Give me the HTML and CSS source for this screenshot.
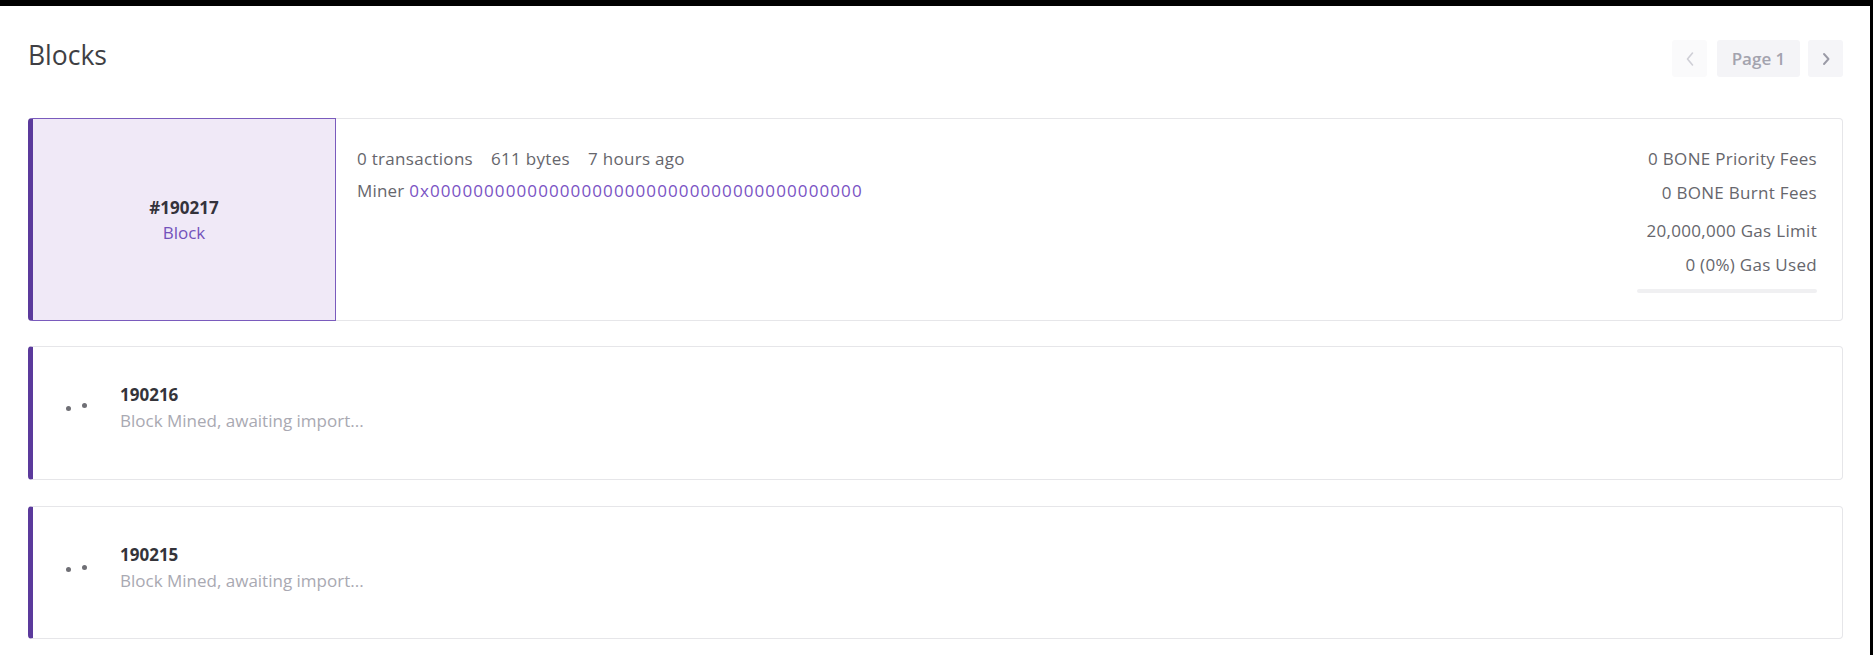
FILE: index.html
```html
<!DOCTYPE html>
<html lang="en">
<head>
<meta charset="utf-8">
<title>Blocks</title>
<link rel="stylesheet" href="styles.css">
</head>
<body>
<div class="page">
  <header class="header">
    <h1 class="title">Blocks</h1>
    <nav class="pager">
      <span class="pager-btn pager-btn--disabled">
        <svg width="10" height="16" viewBox="0 0 10 16"><polyline points="7.5,2 2.5,8 7.5,14" fill="none" stroke="#cfcfd6" stroke-width="1.6" stroke-linecap="round" stroke-linejoin="round"/></svg>
      </span>
      <span class="pager-page">Page 1</span>
      <span class="pager-btn">
        <svg width="10" height="16" viewBox="0 0 10 16"><polyline points="3,3 7.5,8 3,13" fill="none" stroke="#9a9aa6" stroke-width="1.9" stroke-linecap="round" stroke-linejoin="round"/></svg>
      </span>
    </nav>
  </header>

  <div class="list">
    <div class="card card--block">
      <div class="block-tile">
        <div class="block-number">#190217</div>
        <div class="block-label">Block</div>
      </div>
      <div class="block-main">
        <div class="meta-row">
          <span>0 transactions</span>
          <span>611 bytes</span>
          <span>7 hours ago</span>
        </div>
        <div class="meta-row meta-row--miner">Miner&nbsp;<span class="address">0x0000000000000000000000000000000000000000</span></div>
      </div>
      <div class="block-side">
        <div class="side-row">0 BONE Priority Fees</div>
        <div class="side-row">0 BONE Burnt Fees</div>
        <div class="side-row side-row--gap">20,000,000 Gas Limit</div>
        <div class="side-row">0 (0%) Gas Used</div>
        <div class="gas-bar"><div class="gas-fill" style="width:0%"></div></div>
      </div>
    </div>

    <div class="card card--pending">
      <div class="loader"><span class="dot dot--a"></span><span class="dot dot--b"></span></div>
      <div class="pending-text">
        <div class="pending-number">190216</div>
        <div class="pending-status">Block Mined, awaiting import...</div>
      </div>
    </div>

    <div class="card card--pending">
      <div class="loader"><span class="dot dot--c"></span><span class="dot dot--d"></span></div>
      <div class="pending-text">
        <div class="pending-number">190215</div>
        <div class="pending-status">Block Mined, awaiting import...</div>
      </div>
    </div>
  </div>
</div>
</body>
</html>
```

FILE: styles.css
```css
* { box-sizing: border-box; }

html, body {
  margin: 0;
  padding: 0;
  background: #000;
  height: 100%;
}

body {
  font-family: "Open Sans", "Noto Sans", sans-serif;
  font-size: 17px;
  color: #6a6a70;
}

.page {
  margin-top: 6px;
  margin-right: 3px;
  background: #fff;
  min-height: calc(100vh - 6px);
  padding: 29px 27px 20px 28px;
}

.header {
  display: flex;
  justify-content: space-between;
  align-items: flex-start;
}

.title {
  margin: 2px 0 0;
  font-size: 26.5px;
  font-weight: 400;
  line-height: 36px;
  color: #3f3f44;
}

.pager {
  display: flex;
  margin-top: 5px;
}

.pager-btn {
  width: 35px;
  height: 37px;
  display: flex;
  align-items: center;
  justify-content: center;
  background: #f5f5f8;
  border-radius: 3px;
}

.pager-btn--disabled { background: #fafafb; }

.pager-page {
  height: 37px;
  width: 83px;
  margin: 0 8px 0 10px;
  display: flex;
  align-items: center;
  justify-content: center;
  background: #f4f4f7;
  border-radius: 3px;
  color: #a3a3ae;
  font-weight: 600;
  font-size: 17px;
}

.list {
  margin-top: 41px;
  display: flex;
  flex-direction: column;
  gap: 25px;
}

.card {
  border: 1px solid #e6e6e9;
  border-radius: 4px;
  background: #fff;
  display: flex;
}

.card--block {
  height: 203px;
  border-left: none;
}

.block-tile {
  width: 308px;
  flex: none;
  background: #f0e9f7;
  border: 1px solid #7a5bbd;
  border-left: 5px solid #5b3a9c;
  border-radius: 4px 0 0 4px;
  margin: -1px 0;
  display: flex;
  flex-direction: column;
  align-items: center;
  justify-content: center;
  line-height: 25px;
  padding-top: 1px;
}

.block-number {
  font-weight: 700;
  color: #34323b;
  font-size: 17px;
}

.block-label {
  color: #7352bb;
  font-size: 17px;
}

.block-main {
  flex: 1;
  padding: 24px 0 0 21px;
  line-height: 32px;
}

.meta-row {
  display: flex;
  gap: 18px;
  color: #66666c;
  white-space: nowrap;
  letter-spacing: 0.3px;
}

.meta-row--miner { gap: 0; letter-spacing: 0.2px; }

.address {
  color: #7a52c4;
  letter-spacing: 1.1px;
}

.block-side {
  padding: 23px 25px 0 0;
  line-height: 34px;
  text-align: right;
  color: #66666c;
  letter-spacing: 0.3px;
}

.side-row--gap { margin-top: 4px; }

.gas-bar {
  margin-top: 7px;
  margin-left: auto;
  width: 180px;
  height: 4px;
  background: #f0f0f2;
  border-radius: 2px;
}

.gas-fill {
  height: 100%;
  background: #7a52c4;
}

.card--pending {
  height: 134px;
  border-left: 5px solid #5b3a9c;
  padding: 35px 0 0 33px;
}

.list .card--pending:last-child { height: 133px; margin-top: 1px; }

.loader {
  width: 54px;
  height: 50px;
  display: flex;
  align-items: center;
  gap: 11px;
  padding-left: 33px;
  margin-left: -33px;
  box-sizing: content-box;
  flex: none;
}

.dot {
  width: 5px;
  height: 5px;
  border-radius: 50%;
  background: #6f6f75;
  position: relative;
}

.dot--a { top: 1px; }
.dot--b { top: -2px; }
.dot--c { top: 2px; }
.dot--d { top: 0; }

.pending-text {
  line-height: 25.5px;
}

.pending-number {
  font-weight: 700;
  color: #34343a;
}

.pending-status {
  color: #a9a9b2;
}
```
